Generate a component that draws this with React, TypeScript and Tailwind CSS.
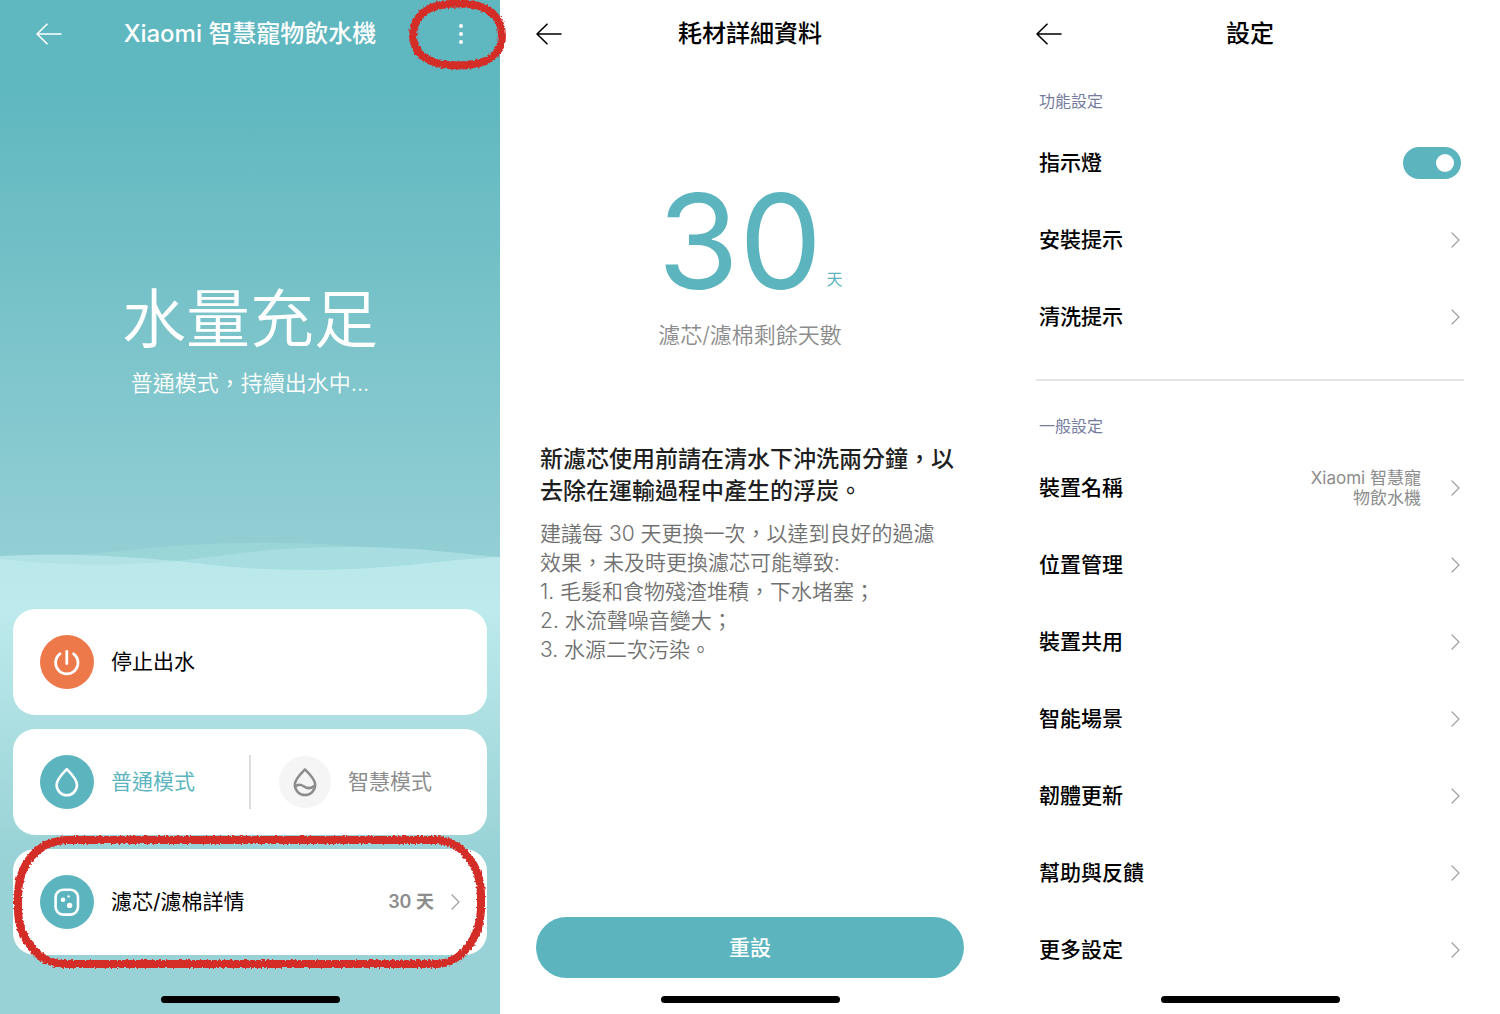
import React from "react";

const strokeCaps = { strokeLinecap: "round", strokeLinejoin: "round" } as const;

function BackIcon() {
  return (
    <svg width="26" height="22" viewBox="0 0 26 22" fill="none" stroke="currentColor" strokeWidth="1.6" {...strokeCaps}>
      <path d="M11 1.2 1 11l10 9.8M1 11h24" />
    </svg>
  );
}

function ChevronIcon() {
  return (
    <svg className="shrink-0 text-[#a0a0a0]" width="9" height="16" viewBox="0 0 9 16" fill="none" stroke="currentColor" strokeWidth="1.2" {...strokeCaps}>
      <path d="M1 1l7 7-7 7" />
    </svg>
  );
}

function PowerIcon() {
  return (
    <svg width="54" height="54" viewBox="0 0 54 54" fill="none" stroke="#fff" strokeWidth="2.8" strokeLinecap="round">
      <path d="M20 18.8a11.2 11.2 0 1 0 13.6 0" />
      <path d="M26.8 16.3v12.4" />
    </svg>
  );
}

function DropIcon() {
  return (
    <svg width="54" height="54" viewBox="0 0 54 54" fill="none" stroke="#fff" strokeWidth="2.6" strokeLinejoin="round">
      <path d="M26.8 14.2c-4.6 4.6-10.2 10.6-10.2 15.8a10.2 10.2 0 0 0 20.4 0c0-5.2-5.600-11.200-10.200-15.800z" />
    </svg>
  );
}

function SmartDropIcon() {
  return (
    <svg width="52" height="52" viewBox="0 0 52 52" fill="none" stroke="#8c8c8c" strokeWidth="2.5" strokeLinejoin="round">
      <path d="M26 13.5c-4.6 4.6-10.2 10-10.2 15.3a10.2 10.2 0 0 0 20.4 0c0-5.3-5.6-10.7-10.2-15.3z" />
      <path d="M16 30.800c2.600-2.600 5.800-2.400 8.600-.6 4 2.700 7.600 2.700 10.900-.6" />
    </svg>
  );
}

function FilterIcon() {
  return (
    <svg width="54" height="54" viewBox="0 0 54 54" fill="none">
      <rect x="15.6" y="14.8" width="22.4" height="24.8" rx="7.5" stroke="#fff" strokeWidth="2.6" />
      <circle cx="23" cy="24.8" r="2.3" fill="#fff" />
      <circle cx="29.6" cy="30.4" r="2.7" fill="#fff" />
      <circle cx="28.6" cy="21.400" r="1.2" fill="#fff" />
    </svg>
  );
}

function Waves() {
  return (
    <svg className="block h-[30px] w-full" viewBox="0 0 500 30" preserveAspectRatio="none">
      <path fill="#9ad5d8" d="M0 16C60 14 90 12 130 8 210-1 290-1 350 4 410 8 450 12 500 15V30H0z" />
      <path fill="#a8dee1" d="M0 16C60 24 130 24 177 19 230 13 270 5 350 5 420 5 460 12 500 15V30H0z" />
      <path fill="#b1e2e5" d="M0 14C70 11 120 14 177 19 240 27 270 28 310 28 390 28 440 18 500 15V30H0z" />
      <path fill="#bbe8eb" d="M0 17C60 24 130 24 177 19 240 27 270 28 310 28 390 28 440 18 500 15V30H0z" />
    </svg>
  );
}

/* Hand-drawn marker outlines */
function MarkerDefs() {
  return (
    <defs>
      <filter id="crayon" x="-10%" y="-10%" width="120%" height="120%" colorInterpolationFilters="sRGB">
        <feTurbulence type="fractalNoise" baseFrequency="0.5" numOctaves="2" seed="4" result="noise" />
        <feDisplacementMap in="SourceGraphic" in2="noise" scale="4" xChannelSelector="R" yChannelSelector="G" />
      </filter>
    </defs>
  );
}

function MenuMarker() {
  return (
    <svg className="pointer-events-none absolute -top-6 -left-[52px] h-[72px] w-[100px] max-w-none" viewBox="0 0 100 72" fill="none">
      <MarkerDefs />
      <path
        filter="url(#crayon)"
        stroke="#d42d27"
        strokeWidth="8"
        d="M35 5C46 3 58 3 68 5 86 8 96 20 96 36 96 50 86 62 68 64 58 66 47 66 37 64 18 62 7 50 7 36 7 20 17 8 35 5z"
      />
    </svg>
  );
}

function CardMarker() {
  return (
    <svg className="pointer-events-none absolute -top-4 left-0 h-[138px] w-full" viewBox="0 0 474 138" preserveAspectRatio="none" fill="none">
      <path
        filter="url(#crayon)"
        stroke="#d42d27"
        strokeWidth="8"
        d="M54 7H424C448 8 468 32 468 62V76C467 106 448 130 424 131H50C26 130 5 106 5 76V64C5 32 24 8 54 7z"
      />
    </svg>
  );
}

function HomeIndicator() {
  return <div className="mx-auto mb-[11px] h-[7px] w-[179px] rounded-full bg-black" />;
}

function TopBar({ title, children }: { title: string; children?: React.ReactNode }) {
  return (
    <header className="flex h-[68px] items-center justify-between px-9">
      <button type="button" aria-label="返回" className="w-8">
        <BackIcon />
      </button>
      <h1 className="text-2xl font-medium whitespace-nowrap">{title}</h1>
      <div className="flex w-8 justify-end">{children}</div>
    </header>
  );
}

function DeviceScreen() {
  return (
    <section className="relative z-10 flex flex-col bg-[#98d2d6]">
      <div className="flex grow flex-col bg-linear-to-b from-[#5fb7bf] from-15% to-[#94d0d5] text-white">
        <TopBar title="Xiaomi 智慧寵物飲水機">
          <button type="button" aria-label="更多" className="relative flex w-1.5 flex-col items-center gap-1">
            <span className="size-1 rounded-full bg-white" />
            <span className="size-1 rounded-full bg-white" />
            <span className="size-1 rounded-full bg-white" />
            <MenuMarker />
          </button>
        </TopBar>
        <div className="mt-[203px] grow text-center">
          <p className="text-[64px] leading-[96px] font-[350]">水量充足</p>
          <p className="text-[22px] leading-8 font-[350]">普通模式，持續出水中...</p>
        </div>
        <Waves />
      </div>
      <div className="flex flex-col gap-[14px] bg-linear-to-b from-[#bbe8eb] via-[#bdeaec] via-10% to-[#98d2d6] to-75% px-[13px] pt-[37px]">
        <button type="button" className="flex h-[106px] items-center gap-[17px] rounded-[22px] bg-white px-[27px] text-[21px]">
          <span className="rounded-full bg-[#ed784a]"><PowerIcon /></span>
          停止出水
        </button>
        <div className="grid h-[106px] grid-cols-[1fr_auto_1fr] items-center rounded-[22px] bg-white px-[27px] text-[21px]">
          <button type="button" className="flex items-center gap-[17px] text-[#5cb5be]">
            <span className="rounded-full bg-[#5cb5be]"><DropIcon /></span>
            普通模式
          </button>
          <div className="h-[54px] w-[2px] bg-[#dedede]" />
          <button type="button" className="flex items-center gap-[17px] pl-7 text-[#8c8c8c]">
            <span className="rounded-full bg-[#f5f5f5]"><SmartDropIcon /></span>
            智慧模式
          </button>
        </div>
        <button type="button" className="relative flex h-[106px] items-center gap-[17px] rounded-[22px] bg-white px-[27px] text-[21px]">
          <span className="rounded-full bg-[#5cb5be]"><FilterIcon /></span>
          <span className="grow text-left">濾芯/濾棉詳情</span>
          <span className="text-lg font-semibold text-[#8c8c8c]">30 天</span>
          <ChevronIcon />
          <CardMarker />
        </button>
      </div>
      <div className="mt-[41px]">
        <HomeIndicator />
      </div>
    </section>
  );
}

function FilterScreen() {
  return (
    <section className="flex flex-col">
      <TopBar title="耗材詳細資料" />
      <div className="mt-[95px] text-center">
        <p className="flex items-end justify-center gap-1 text-[#5cb5be]">
          <span className="text-[132px] leading-[156px]">30</span>
          <span className="mb-7 text-base leading-6">天</span>
        </p>
        <p className="text-[22px] leading-8 font-[350] text-[#8c8c8c]">濾芯/濾棉剩餘天數</p>
      </div>
      <div className="mt-[92px] grow px-10">
        <h2 className="text-[23px] leading-8 font-medium whitespace-nowrap text-[#1f1f1f]">
          新濾芯使用前請在清水下沖洗兩分鐘，以
          <br />
          去除在運輸過程中產生的浮炭。
        </h2>
        <div className="mt-3 text-[21px] leading-[29px] font-[350] whitespace-nowrap text-[#707070]">
          <p>
            建議每 30 天更換一次，以達到良好的過濾
            <br />
            效果，未及時更換濾芯可能導致:
          </p>
          <ol>
            <li>1. 毛髮和食物殘渣堆積，下水堵塞；</li>
            <li>2. 水流聲噪音變大；</li>
            <li>3. 水源二次污染。</li>
          </ol>
        </div>
      </div>
      <button type="button" className="mx-9 mb-[18px] h-[61px] rounded-full bg-[#5cb5be] text-[21px] font-medium text-white">
        重設
      </button>
      <HomeIndicator />
    </section>
  );
}

function SettingRow({ label, value }: { label: string; value?: React.ReactNode }) {
  return (
    <li>
      <button type="button" className="flex h-[77px] w-full items-center gap-[30px] pr-1 pl-[3px] text-left">
        <span className="grow text-[21px] font-medium">{label}</span>
        {value && <span className="text-right text-[17px] leading-5 text-[#8c8c8c]">{value}</span>}
        <ChevronIcon />
      </button>
    </li>
  );
}

const generalItems = ["位置管理", "裝置共用", "智能場景", "韌體更新", "幫助與反饋", "更多設定"];

function SettingsScreen() {
  return (
    <section className="flex flex-col">
      <TopBar title="設定" />
      <div className="flex grow flex-col px-9">
        <h2 className="mt-[21px] pl-[3px] text-base leading-6 text-[#757c9e]">功能設定</h2>
        <label className="mt-[11px] flex h-[77px] items-center justify-between pr-[3px] pl-[3px] text-[21px] font-medium">
          指示燈
          <input
            type="checkbox"
            defaultChecked
            className="h-8 w-[58px] appearance-none rounded-full bg-[#d9d9d9] px-[7px] py-[7px] before:block before:size-[18px] before:rounded-full before:bg-white checked:bg-[#5cb5be] checked:before:ml-auto"
          />
        </label>
        <ul>
          <SettingRow label="安裝提示" />
          <SettingRow label="清洗提示" />
        </ul>
        <hr className="mt-6 border-t-2 border-[#e5e5e5]" />
        <h2 className="mt-[33px] pl-[3px] text-base leading-6 text-[#757c9e]">一般設定</h2>
        <ul className="mt-[11px]">
          <SettingRow
            label="裝置名稱"
            value={
              <>
                Xiaomi 智慧寵
                <br />
                物飲水機
              </>
            }
          />
          {generalItems.map((label) => (
            <SettingRow key={label} label={label} />
          ))}
        </ul>
      </div>
      <HomeIndicator />
    </section>
  );
}

export default function App() {
  return (
    <main className="grid min-h-screen grid-cols-3 bg-white font-['Inter','Noto_Sans_CJK_TC',sans-serif] text-black" lang="zh-Hant">
      <DeviceScreen />
      <FilterScreen />
      <SettingsScreen />
    </main>
  );
}
